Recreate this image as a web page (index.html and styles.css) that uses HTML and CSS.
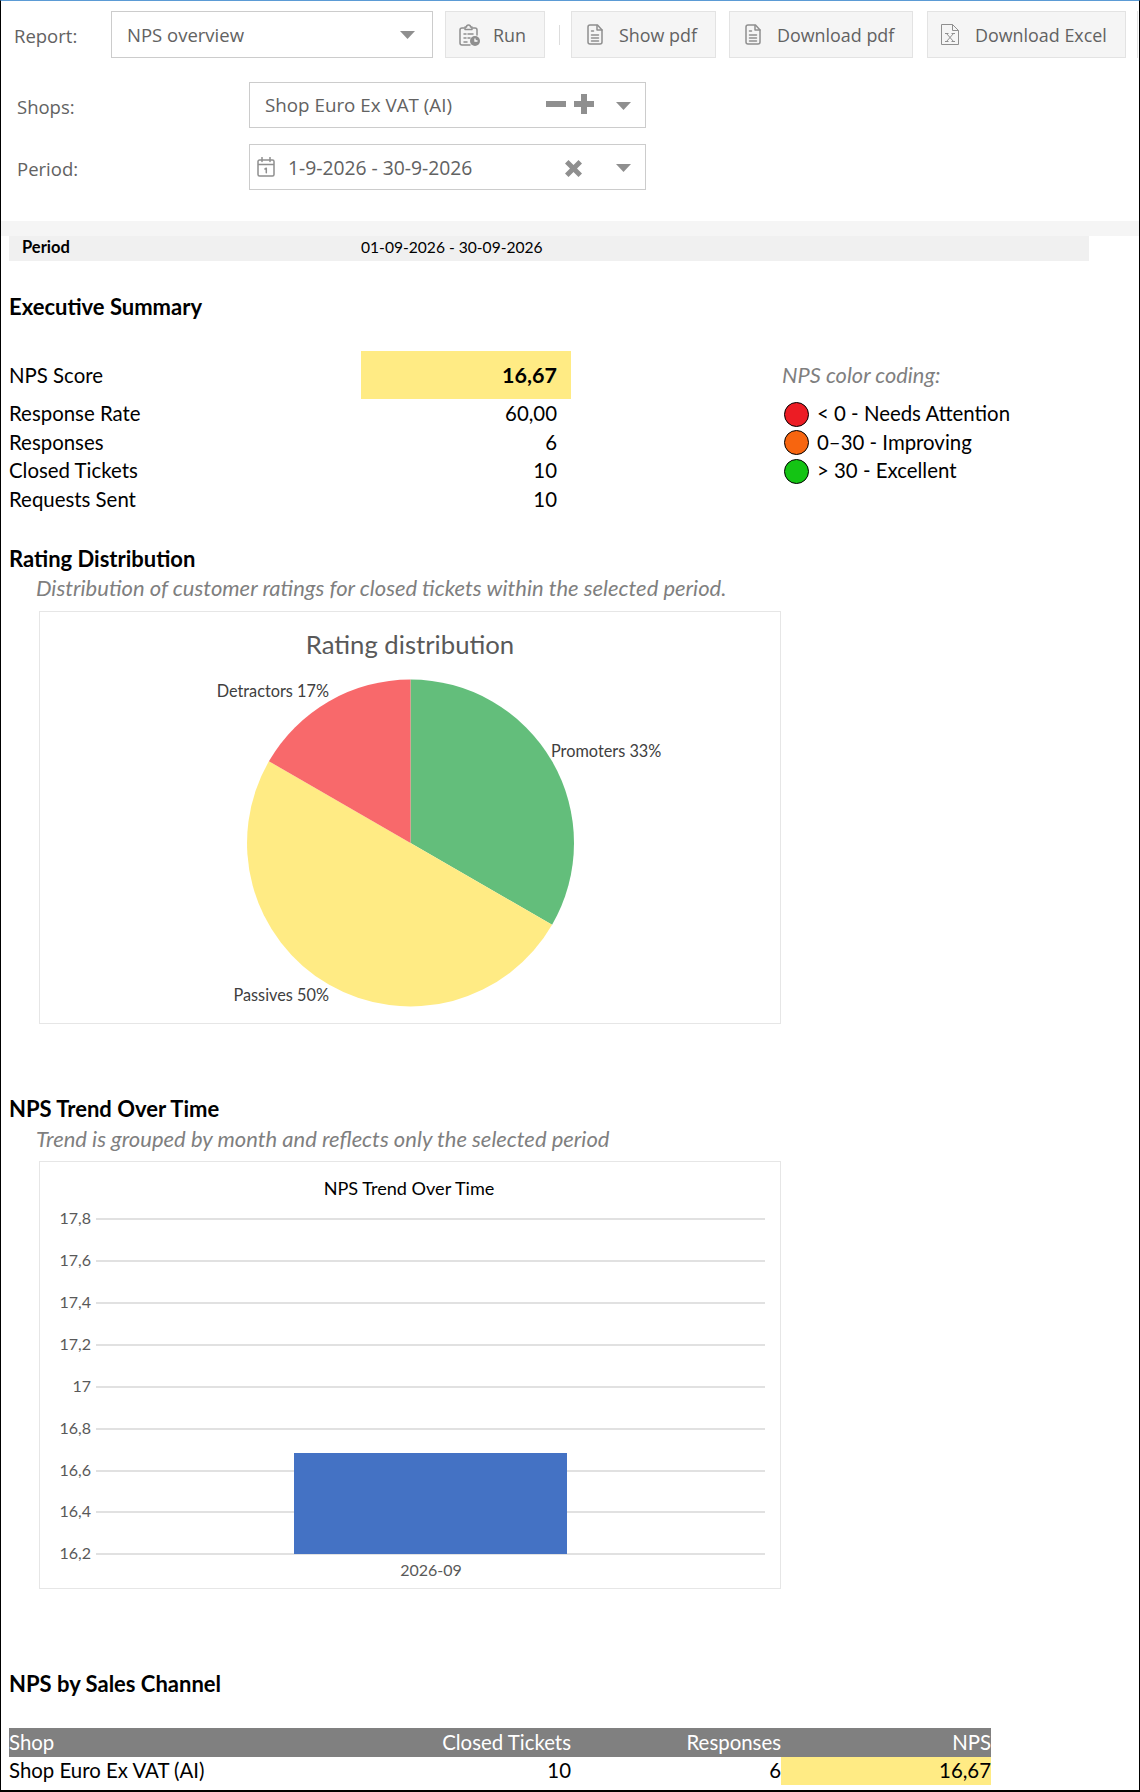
FILE: index.html
```html
<!DOCTYPE html>
<html lang="en">
<head>
<meta charset="utf-8">
<title>NPS overview</title>
<link rel="stylesheet" href="styles.css">
</head>
<body>
<div class="page">
  <div class="toolbar">
    <span class="lbl lbl-report">Report:</span>
    <div class="box box-report"><span class="box-text">NPS overview</span>
      <svg class="arrow" viewBox="0 0 15 8"><path d="M0 0h15L7.5 8z"/></svg></div>
    <button class="btn btn-run">
      <svg class="ico ico-run" viewBox="0 0 21 22"><path class="s" d="M5 4H3a2 2 0 0 0-2 2v13a2 2 0 0 0 2 2h8M14 4h2a2 2 0 0 1 2 2v5"/><path class="s" d="M6 5V3h1.5a2 2 0 0 1 4 0H13v2.500H6zM5 10h2M9 10h5M5 14h2M9 14h2M5 18h3"/><circle class="f" cx="16" cy="17" r="5"/><path class="w" d="M16 14.500V17h2.500"/></svg>
      <span>Run</span></button>
    <span class="sep"></span>
    <button class="btn btn-show">
      <svg class="ico ico-doc" viewBox="0 0 16 21"><use href="#doc"/></svg><span>Show pdf</span></button>
    <button class="btn btn-dl">
      <svg class="ico ico-doc" viewBox="0 0 16 21"><use href="#doc"/></svg><span>Download pdf</span></button>
    <button class="btn btn-xl">
      <svg class="ico ico-xl" viewBox="0 0 18 21"><path class="t" d="M.5.500h11l6 6v14H.500zM11.500.500v6h6"/><path class="t" d="M5.500 9.500l7 8M12.500 9.500l-7 8M4 9.500h3.500M10.500 9.500H14M4 17.500h3.500M10.500 17.500H14"/></svg>
      <span>Download Excel</span></button>
    <span class="sliver"></span>
  </div>

  <div class="filters">
    <div class="frow">
      <span class="lbl lbl-f">Shops:</span>
      <div class="box box-f box-shops"><span class="box-text txt-shops">Shop Euro Ex VAT (AI)</span>
        <svg class="pm" viewBox="0 0 48 20"><path d="M0 7h20v6H0zM28 7h7V0h6v7h7v6h-7v7h-6v-7h-7z"/></svg>
        <svg class="arrow arrow-f" viewBox="0 0 15 8"><path d="M0 0h15L7.500 8z"/></svg></div>
    </div>
    <div class="frow">
      <span class="lbl lbl-f">Period:</span>
      <div class="box box-f box-period">
        <svg class="ico-cal" viewBox="0 0 18 20"><path class="s" d="M2.500 3h13A1.500 1.500 0 0 1 17 4.500v13a1.500 1.500 0 0 1-1.500 1.500h-13A1.500 1.500 0 0 1 1 17.500v-13A1.500 1.500 0 0 1 2.500 3zM1 7.500h16M5 .5v4M13 .5v4M8 12l1.300-.8v4.500"/></svg>
        <span class="box-text txt-period">1-9-2026 - 30-9-2026</span>
        <svg class="cross" viewBox="0 0 17 17"><path d="M3.500 0L8.500 5l5-5L17 3.500l-5 5 5 5-3.500 3.500-5-5-5 5L0 13.500l5-5-5-5z"/></svg>
        <svg class="arrow arrow-f" viewBox="0 0 15 8"><path d="M0 0h15L7.500 8z"/></svg></div>
    </div>
  </div>

  <div class="strip"></div>
  <div class="report">
    <div class="period-row"><b>Period</b><span>01-09-2026 - 30-09-2026</span></div>

    <h2 class="h h-exec">Executive Summary</h2>
    <div class="summary">
      <div class="kpis">
        <div class="kpi kpi-main"><span>NPS Score</span><b class="score">16,67</b></div>
        <div class="kpi"><span>Response Rate</span><span class="num">60,00</span></div>
        <div class="kpi"><span>Responses</span><span class="num">6</span></div>
        <div class="kpi"><span>Closed Tickets</span><span class="num">10</span></div>
        <div class="kpi"><span>Requests Sent</span><span class="num">10</span></div>
      </div>
      <div class="legend">
        <div class="legend-title">NPS color coding:</div>
        <div class="leg"><i class="dot dot-r"></i><span>&lt; 0 - Needs Attention</span></div>
        <div class="leg"><i class="dot dot-o"></i><span>0–30 - Improving</span></div>
        <div class="leg"><i class="dot dot-g"></i><span>&gt; 30 - Excellent</span></div>
      </div>
    </div>

    <h2 class="h h-rating">Rating Distribution</h2>
    <p class="sub">Distribution of customer ratings for closed tickets within the selected period.</p>
    <div class="chart chart-pie">
      <svg viewBox="0 0 740 411" width="740" height="411">
        <path fill="#63BE7B" d="M370.500 231V67.500a163.500 163.500 0 0 1 141.600 245.250z"/>
        <path fill="#FFEB84" d="M370.500 231L512.100 312.750A163.500 163.500 0 0 1 228.900 149.250z"/>
        <path fill="#F8696B" d="M370.500 231L228.900 149.250A163.500 163.500 0 0 1 370.500 67.500z"/>
        <text class="pie-title" x="370" y="42" text-anchor="middle">Rating distribution</text>
        <text class="pie-lab" x="289" y="85" text-anchor="end">Detractors 17%</text>
        <text class="pie-lab" x="511" y="145">Promoters 33%</text>
        <text class="pie-lab" x="289" y="389" text-anchor="end">Passives 50%</text>
      </svg>
    </div>

    <h2 class="h h-trend">NPS Trend Over Time</h2>
    <p class="sub sub-trend">Trend is grouped by month and reflects only the selected period</p>
    <div class="chart chart-bar">
      <svg viewBox="0 0 740 426" width="740" height="426">
        <text class="bar-title" x="369" y="33" text-anchor="middle">NPS Trend Over Time</text>
        <g class="grid">
          <path d="M56 57H725M56 99H725M56 141H725M56 183H725M56 225H725M56 267H725M56 309H725M56 350H725M56 392H725"/>
        </g>
        <g class="ticks" text-anchor="end">
          <text x="51" y="62">17,8</text><text x="51" y="104">17,6</text><text x="51" y="146">17,4</text>
          <text x="51" y="188">17,2</text><text x="51" y="230">17</text><text x="51" y="272">16,8</text>
          <text x="51" y="314">16,6</text><text x="51" y="355">16,4</text><text x="51" y="397">16,2</text>
        </g>
        <rect x="254" y="291" width="273" height="101" fill="#4472C4"/>
        <text class="xlab" x="391" y="414" text-anchor="middle">2026-09</text>
      </svg>
    </div>

    <h2 class="h h-chan">NPS by Sales Channel</h2>
    <table class="tbl">
      <thead><tr><th class="c1">Shop</th><th>Closed Tickets</th><th>Responses</th><th>NPS</th></tr></thead>
      <tbody><tr><td class="c1">Shop Euro Ex VAT (AI)</td><td>10</td><td>6</td><td class="hl">16,67</td></tr></tbody>
    </table>
  </div>
</div>
<svg class="defs" width="0" height="0"><defs>
  <g id="doc"><path class="s" d="M10.500 1H3a2 2 0 0 0-2 2v15a2 2 0 0 0 2 2h10a2 2 0 0 0 2-2V6z"/><path class="s" d="M10 1.500V6h5M4.500 7h2M4.500 11h7M4.500 14h7M4.500 17h7"/></g>
</defs></svg>
</body>
</html>
```
FILE: styles.css
```css
* { box-sizing: border-box; }
html, body { margin: 0; padding: 0; background: #fff; }
.defs { position: absolute; }
.page {
  width: 1140px; height: 1792px; overflow: hidden;
  border-left: 1px solid #000; border-right: 1px solid #000; border-bottom: 2px solid #000;
  border-top: 1px solid #5b9bd5;
  font-family: "Open Sans", sans-serif; color: #626262;
}
.s { fill: none; stroke: #8f8f8f; stroke-width: 1.5; stroke-linecap: round; stroke-linejoin: round; }
.t { fill: none; stroke: #8f8f8f; stroke-width: 1; }
.f { fill: #8f8f8f; }
.w { fill: none; stroke: #fff; stroke-width: 1.300; }

.toolbar { display: flex; align-items: stretch; height: 47px; margin-top: 10px; padding-left: 13px; }
.lbl { display: flex; align-items: center; font-size: 18.500px; padding-top: 2px; }
.lbl-report { width: 97px; }
.box { display: flex; align-items: center; background: #fff; border: 1px solid #ccc; font-size: 18.500px; }
.box-report { width: 322px; padding: 0 17px 0 15px; }
.box-text { flex: 1; white-space: nowrap; }
.txt-shops { font-size: 18.800px; }
.txt-period { font-size: 19.300px; }
.arrow { width: 15px; height: 8px; fill: #8f8f8f; flex: none; }
.arrow-f { margin-top: 1px; }
.btn {
  display: flex; align-items: center; background: #f5f5f5; border: 1px solid #e3e3e3; padding: 0;
  font: 17.900px "Open Sans", sans-serif; color: #626262; white-space: nowrap;
}
.btn span { padding-top: 1px; }
.btn-run { width: 100px; margin-left: 12px; padding-left: 13px; gap: 13px; }
.btn-show { width: 145px; padding-left: 15px; gap: 16px; }
.btn-dl { width: 184px; margin-left: 13px; padding-left: 15px; gap: 16px; }
.btn-xl { width: 199px; margin-left: 14px; padding-left: 13px; gap: 16px; }
.sep { width: 1px; height: 20px; background: #ddd; margin: 14px 11px 0 14px; }
.sliver { width: 1px; background: #e3e3e3; margin-left: 11px; }
.ico { flex: none; }
.ico-run { width: 21px; height: 22px; }
.ico-doc { width: 16px; height: 21px; }
.ico-xl { width: 18px; height: 21px; }

.filters { display: flex; flex-direction: column; gap: 16px; margin-top: 24px; padding-left: 16px; }
.frow { display: flex; height: 46px; }
.lbl-f { width: 232px; }
.box-f { width: 397px; padding-right: 14px; }
.box-shops { padding-left: 15px; }
.pm { width: 48px; height: 20px; fill: #8f8f8f; margin: 0 22px 2px 0; }
.box-period { padding-left: 7px; }
.ico-cal { width: 18px; height: 20px; margin-right: 13px; flex: none; }
.cross { width: 17px; height: 17px; fill: #8f8f8f; margin: 2px 34px 0 0; }

.strip { height: 15px; margin-top: 31px; background: #f5f5f5; }

.report { padding-left: 8px; font-family: Lato, "Liberation Sans", sans-serif; color: #000; font-size: 20.400px; }
.period-row { display: flex; align-items: center; width: 1080px; height: 25px; padding-bottom: 3px; background: #f0f0f0; font-size: 15.600px; }
.period-row b { width: 352px; padding-left: 13px; font-size: 16.500px; }
.h { margin: 0; height: 30px; line-height: 30px; font-size: 22px; font-weight: 700; }
.h-exec { margin-top: 31px; }
.h-rating { margin-top: 30px; }
.h-trend { margin-top: 70px; }
.h-chan { margin-top: 80px; }

.summary { display: flex; margin-top: 29px; }
.kpis { width: 562px; }
.kpi { display: flex; justify-content: space-between; align-items: center; height: 28.500px; padding: 0 14px 2px 0; }
.kpi-main { height: 49px; padding: 0; align-items: stretch; }
.kpi-main span { align-self: center; padding-bottom: 2px; }
.score {
  display: flex; align-items: center; justify-content: flex-end;
  width: 210px; height: 48px; padding-right: 14px; background: #FFEB84; font-size: 21.500px;
}
.legend { margin-left: 211px; }
.legend-title { height: 49px; line-height: 48px; font-style: italic; color: #7f7f7f; font-size: 21.800px; }
.leg { display: flex; align-items: center; height: 28.500px; }
.leg span { padding-bottom: 2px; }
.dot { width: 25px; height: 25px; margin: 0 8px 0 2px; border-radius: 50%; border: 1px solid #000; flex: none; }
.dot-r { background: #ec1c24; }
.dot-o { background: #f7650f; }
.dot-g { background: #14c414; }

.sub { margin: 0 0 7px; padding-left: 27px; height: 30px; line-height: 28px; font-style: italic; color: #7f7f7f; font-size: 22px; }
.sub-trend { height: 31px; margin-bottom: 6px; line-height: 30px; }
.chart { margin-left: 30px; width: 742px; border: 1px solid #e6e6e6; background: #fff; }
.chart svg { display: block; }
.chart text { font-family: Lato, "Liberation Sans", sans-serif; }
.chart-pie { height: 413px; }
.chart-bar { height: 428px; }
.pie-title { font-size: 25.700px; fill: #595959; }
.pie-lab { font-size: 16.300px; fill: #404040; }
.bar-title { font-size: 18.100px; fill: #000; }
.grid path { stroke: #e1e1e1; stroke-width: 2; fill: none; }
.ticks text, .xlab { font-size: 16px; fill: #595959; }

.tbl { width: 982px; margin-top: 29px; border-collapse: collapse; table-layout: fixed; }
.tbl th, .tbl td { padding: 0 0 2px; text-align: right; font-weight: 400; width: 210px; white-space: nowrap; }
.tbl th { height: 29px; background: #808080; color: #fff; }
.tbl td { height: 28px; }
.tbl .c1 { width: 352px; text-align: left; }
.tbl .hl { background: #FFEB84; }
```
